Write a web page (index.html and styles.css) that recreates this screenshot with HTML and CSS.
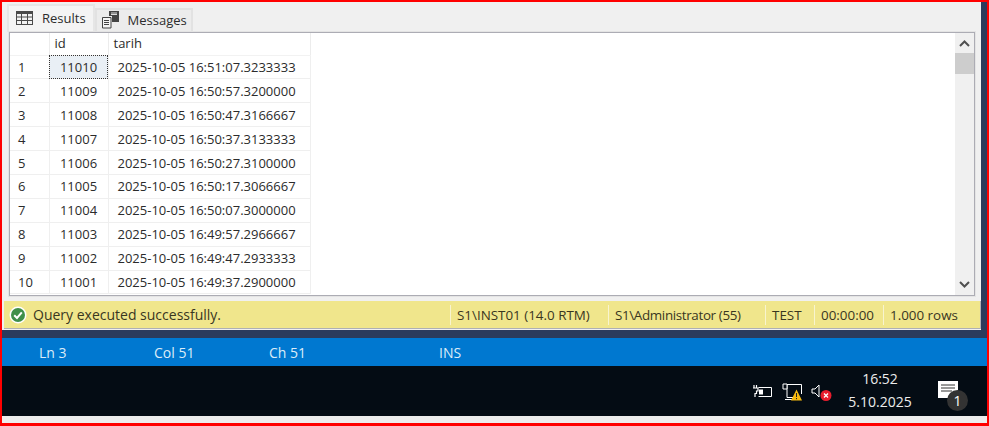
FILE: index.html
```html
<!DOCTYPE html>
<html lang="en">
<head>
<meta charset="utf-8">
<title>Results</title>
<link rel="stylesheet" href="styles.css">
</head>
<body>
<div class="shot">
  <div class="window">
    <div class="pane">
      <div class="tabs">
        <div class="tab tab-active">
          <svg class="ico-grid" width="18" height="14" viewBox="0 0 18 14"><path d="M0 0H17V14H0Z" fill="#4a4a4a"/><path d="M1 3h4v2.500H1zM6 3h5v2.500H6zM12 3h4v2.500h-4zM1 6.500h4V9H1zM6 6.500h5V9H6zM12 6.500h4V9h-4zM1 10h4v3H1zM6 10h5v3H6zM12 10h4v3h-4z" fill="#f2f2f2"/></svg>
          <span>Results</span>
        </div>
        <div class="tab tab-msg">
          <svg class="ico-msg" width="19" height="18" viewBox="0 0 19 18"><path d="M1.500 6.500H10V17H1.500Z" fill="#f4f4f4" stroke="#444"/><path d="M3 9.500h5M3 11.500h5M3 13.500h5" stroke="#444"/><path d="M8 0h10v11H11V5H8Z" fill="#444"/><path d="M10 2h6M10 3.500h6" stroke="#ddd"/></svg>
          <span>Messages</span>
        </div>
      </div>
      <div class="gridbox">
        <div class="gridscroll">
          <table class="grid">
            <colgroup><col class="c0"><col class="c1"><col class="c2"></colgroup>
            <thead><tr><th></th><th>id</th><th>tarih</th></tr></thead>
            <tbody>
              <tr><td class="n">1</td><td class="id sel">11010</td><td>2025-10-05 16:51:07.3233333</td></tr>
              <tr><td class="n">2</td><td class="id">11009</td><td>2025-10-05 16:50:57.3200000</td></tr>
              <tr><td class="n">3</td><td class="id">11008</td><td>2025-10-05 16:50:47.3166667</td></tr>
              <tr><td class="n">4</td><td class="id">11007</td><td>2025-10-05 16:50:37.3133333</td></tr>
              <tr><td class="n">5</td><td class="id">11006</td><td>2025-10-05 16:50:27.3100000</td></tr>
              <tr><td class="n">6</td><td class="id">11005</td><td>2025-10-05 16:50:17.3066667</td></tr>
              <tr><td class="n">7</td><td class="id">11004</td><td>2025-10-05 16:50:07.3000000</td></tr>
              <tr><td class="n">8</td><td class="id">11003</td><td>2025-10-05 16:49:57.2966667</td></tr>
              <tr><td class="n">9</td><td class="id">11002</td><td>2025-10-05 16:49:47.2933333</td></tr>
              <tr><td class="n">10</td><td class="id">11001</td><td>2025-10-05 16:49:37.2900000</td></tr>
            </tbody>
          </table>
        </div>
        <div class="scrollbar">
          <svg width="19" height="12" viewBox="0 0 19 12"><path d="M5 8 9.500 3.500 14 8" fill="none" stroke="#505050" stroke-width="2"/></svg>
          <div class="thumb"></div>
          <div class="track"></div>
          <svg width="19" height="12" viewBox="0 0 19 12"><path d="M5 4 9.500 8.500 14 4" fill="none" stroke="#505050" stroke-width="2"/></svg>
        </div>
      </div>
      <div class="status">
        <svg class="ok" width="18" height="18" viewBox="0 0 18 18"><circle cx="9" cy="9" r="8.500" fill="#fff"/><circle cx="9" cy="9" r="7" fill="#3f8f4a"/><path d="M5.200 9.200 8 12l4.800-5.600" fill="none" stroke="#fff" stroke-width="2"/></svg>
        <span class="msg">Query executed successfully.</span>
        <span class="cell c-server">S1\INST01 (14.0 RTM)</span>
        <span class="cell c-user">S1\Administrator (55)</span>
        <span class="cell c-db">TEST</span>
        <span class="cell c-time">00:00:00</span>
        <span class="cell c-rows">1.000 rows</span>
      </div>
    </div>
    <div class="edge"></div>
  </div>
  <div class="darkline"></div>
  <div class="bluebar">
    <span class="b-ln">Ln 3</span>
    <span class="b-col">Col 51</span>
    <span class="b-ch">Ch 51</span>
    <span class="b-ins">INS</span>
  </div>
  <div class="taskbar">
    <div class="tray">
      <svg class="t-power" width="20" height="13" viewBox="0 0 20 13"><path d="M6.500 2.500H19.500V11.500H6.500" fill="none" stroke="#fff"/><path d="M7 4.500h4v5H7z" fill="#fff"/><path d="M2 0v3M4.500 0v3M1 3h5v3H4.500v2.500H3V12" fill="none" stroke="#fff" stroke-width="1.200"/></svg>
      <svg class="t-net" width="20" height="18" viewBox="0 0 20 18"><path d="M1.500 1.500H19.500V11M5 1.500V14.500H11" fill="none" stroke="#fff"/><path d="M1 1h4v5H1z" fill="#050c14" stroke="#fff"/><path d="M3 16.500h7" stroke="#fff"/><path d="M14.500 6.500 20 17.500H9Z" fill="#f6b90f"/><path d="M14.500 10v4M14.500 15v1.200" stroke="#222"/></svg>
      <svg class="t-vol" width="21" height="17" viewBox="0 0 21 17"><path d="M1 5H4L8 1V13L4 9H1Z" fill="none" stroke="#fff"/><circle cx="15" cy="11.500" r="5.500" fill="#e81d2d"/><path d="M13 9.500 17 13.500M17 9.500 13 13.500" stroke="#fff" stroke-width="1.300"/></svg>
      <div class="clock"><span>16:52</span><span>5.10.2025</span></div>
      <div class="notif">
        <svg width="20" height="17" viewBox="0 0 20 17"><path d="M0 0H20V17H0Z" fill="#fff"/><path d="M3 4H17M3 7H17M3 10H14" stroke="#333"/></svg>
        <span class="badge">1</span>
      </div>
    </div>
  </div>
  <div class="under"></div>
</div>
</body>
</html>
```

FILE: styles.css
```css
html, body { margin: 0; padding: 0; }
body { width: 989px; height: 426px; overflow: hidden; background: #f0f0f0; font-family: "Open Sans", "Noto Sans", sans-serif; }
.shot {
  box-sizing: border-box;
  width: 989px;
  height: 426px;
  border: solid #f00;
  border-width: 2px 2px 3px 2px;
  display: flex;
  flex-direction: column;
  background: #f0f0f0;
}
.window { display: flex; height: 328px; }
.pane { flex: 1; min-width: 0; display: flex; flex-direction: column; padding: 0 0 0 1px; background: #f0f0f0; }
.edge { width: 6px; background: #2b3b5c; }

.tabs { display: flex; height: 30px; padding: 1px 0 0 4px; box-sizing: border-box; align-items: flex-end; }
.tab {
  display: flex; align-items: center; gap: 7px;
  height: 24px; padding: 0 4px 2px 5px;
  box-sizing: border-box;
  background: #ececec; border: 2px solid #e2e2e2; border-bottom: 0;
  font-size: 13px; color: #2c2c2c;
}
.tab-active { height: 28px; background: #f4f4f4; padding: 0 7px 3px 7px; gap: 8px; border-color: #e6e6e6; }
.tab-msg { padding-left: 4px; padding-right: 4px; gap: 8px; }

.gridbox {
  margin-left: 6px; width: 966px; height: 264px;
  box-sizing: border-box;
  border: 1px solid #acacb4;
  box-shadow: 0 0 0 1px #e4e4e4;
  background: #fff;
  display: flex;
}
.gridscroll { flex: 1; min-width: 0; overflow: hidden; }
.grid { border-collapse: collapse; table-layout: fixed; width: 300px; font-size: 13px; color: #2b2b2b; }
.c0 { width: 39px; } .c1 { width: 59px; } .c2 { width: 202px; }
.grid th { height: 22px; padding: 0 0 2px 5px; text-align: left; font-weight: 400; border-right: 1px solid #ececec; border-bottom: 1px solid #f2f2f2; box-sizing: border-box; }
.grid td { height: 23.900px; padding: 0 0 0 9px; border-right: 1px solid #efefef; border-bottom: 1px solid #efefef; box-sizing: border-box; white-space: nowrap; }
.grid td.n { padding-left: 8px; }
.grid td.id { text-align: center; padding: 0; }
.grid td.sel { background: #e9eff5; outline: 1px dotted #333; outline-offset: -1px; }

.scrollbar { width: 19px; background: #f0f0f0; display: flex; flex-direction: column; }
.scrollbar svg { display: block; margin: 5px 0 0; flex: none; }
.scrollbar svg:last-child { margin: 0 0 5px; }
.thumb { height: 21px; margin-top: 3px; background: #cdcdcd; flex: none; }
.track { flex: 1; }

.status {
  margin: 5px 0 0 1px; height: 28px; box-sizing: border-box;
  background: #f0e68c;
  border-bottom: 1px solid #aeb0b4;
  border-right: 1px solid #aeb0b4;
  display: flex; align-items: center;
  font-size: 13.400px; color: #39361f;
  padding-left: 5px;
}
.ok { margin-right: 6px; flex: none; }
.msg { flex: 1; font-size: 14px; }
.cell { border-left: 1px solid #f8f4cf; padding-left: 6px; height: 20px; line-height: 20px; box-sizing: border-box; white-space: nowrap; flex: none; }
.c-server { width: 158px; } .c-user { width: 157px; letter-spacing: -0.350px; } .c-db { width: 49px; } .c-time { width: 69px; } .c-rows { width: 97px; }

.darkline { height: 8px; background: #2b3b5c; }
.bluebar { height: 28px; background: #0078d0; color: #dcecf8; font-size: 14px; display: grid; grid-template-columns: 115px 115px 170px 1fr; align-items: center; padding-left: 37px; }
.taskbar { height: 50px; background: #040c14; display: flex; justify-content: flex-end; }
.tray { display: flex; align-items: flex-start; color: #ececec; font-size: 14px; }
.t-power { margin: 19px 0 0 0; }
.t-net { margin: 17px 0 0 10px; }
.t-vol { margin: 18px 0 0 9px; }
.clock { display: flex; flex-direction: column; align-items: center; gap: 3px; line-height: 20px; margin: 3px 0 0 15px; width: 66px; height: 44px; }
.notif { position: relative; margin: 15px 0 0 0; width: 74px; padding-left: 25px; box-sizing: border-box; }
.notif svg { display: block; }
.badge {
  position: absolute; left: 34px; top: 9px;
  width: 21px; height: 21px; border-radius: 50%;
  background: #333; color: #fff; font-size: 14px;
  display: flex; align-items: center; justify-content: center;
}
.under { flex: 1; background: #ededed; }
```
